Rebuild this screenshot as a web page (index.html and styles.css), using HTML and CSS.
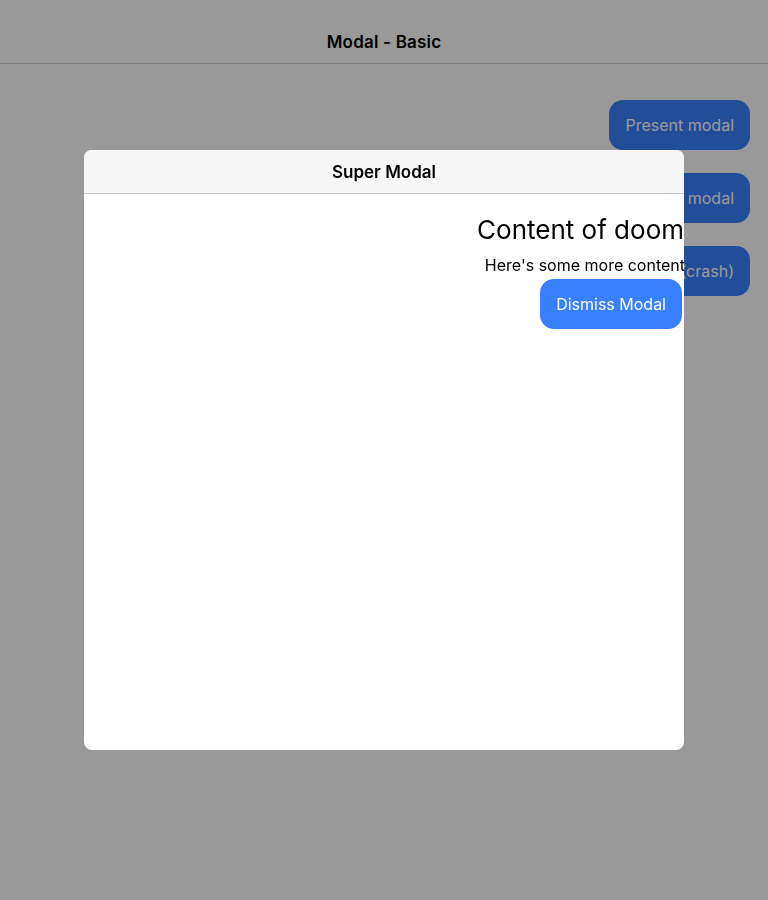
FILE: index.html
```html
<!DOCTYPE html>
<html>
<head>
<meta charset="utf-8">
<link rel="stylesheet" href="styles.css">
</head>
<body>
<header class="toolbar"><h1 class="toolbar-title">Modal - Basic</h1></header>
<main class="page">
  <button class="btn">Present modal</button>
  <button class="btn">Present another modal</button>
  <button class="btn">Present modal (crash)</button>
</main>
<div class="backdrop">
  <div class="modal">
    <div class="modal-header">Super Modal</div>
    <div class="modal-content">
      <h2 class="doom">Content of doom</h2>
      <p class="more">Here's some more content</p>
      <button class="dismiss">Dismiss Modal</button>
    </div>
  </div>
</div>
</body>
</html>
```
FILE: styles.css
```css
html, body { margin: 0; padding: 0; }
body {
  width: 768px;
  height: 900px;
  background: #fff;
  font-family: Inter, "Noto Sans", sans-serif;
  overflow: hidden;
}
.toolbar {
  height: 43px;
  padding-top: 20px;
  border-bottom: 1px solid #d6d6d6;
  display: flex;
  align-items: center;
  justify-content: center;
}
.toolbar-title {
  margin: 0;
  font-size: 17px;
  font-weight: 600;
  color: #000;
  letter-spacing: 0.2px;
}
.page {
  display: flex;
  flex-direction: column;
  align-items: flex-end;
  padding: 36px 18px 0 0;
  gap: 24px;
}
.btn {
  border: none;
  background: #3880ff;
  color: #fff;
  font-family: Inter, "Noto Sans", sans-serif;
  font-size: 16px;
  height: 50px;
  padding: 0 16px;
  border-radius: 14px;
}
.btn + .btn { margin-top: -1px; }
.backdrop {
  position: fixed;
  inset: 0;
  background: rgba(0,0,0,0.4);
  display: flex;
  align-items: center;
  justify-content: center;
}
.modal {
  width: 600px;
  height: 600px;
  background: #fff;
  border-radius: 8px;
  overflow: hidden;
  display: flex;
  flex-direction: column;
}
.modal-header {
  height: 43px;
  background: #f7f7f7;
  border-bottom: 1px solid #c8c8c8;
  display: flex;
  align-items: center;
  justify-content: center;
  font-size: 17px;
  font-weight: 600;
  color: #000;
}
.modal-content {
  display: flex;
  flex-direction: column;
  align-items: flex-end;
  padding-top: 21px;
}
.doom {
  margin: 0;
  font-size: 26px;
  font-weight: 400;
  line-height: 30px;
  color: #000;
}
.more {
  margin: 11px 0 0 0;
  font-size: 16px;
  line-height: 19px;
  color: #000;
  margin-right: -1px;
}
.dismiss {
  margin-top: 4px;
  margin-right: 2px;
  border: none;
  background: #3880ff;
  color: #fff;
  font-family: Inter, "Noto Sans", sans-serif;
  font-size: 16px;
  height: 50px;
  padding: 0 16px;
  border-radius: 14px;
}
```
